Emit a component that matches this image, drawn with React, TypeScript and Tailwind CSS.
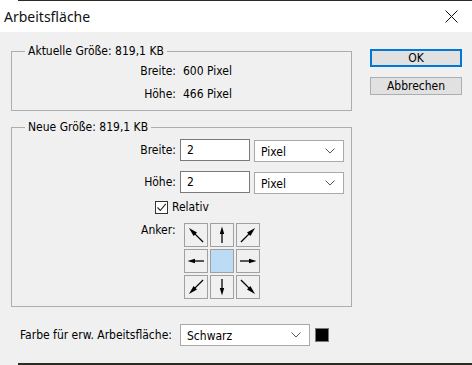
import React from "react";

const BODY = "font-['DejaVu_Sans_Condensed','DejaVu_Sans',sans-serif] text-[12px]";

function Arrow({ angle }: { angle: number }) {
  const diag = angle % 90 !== 0;
  return (
    <svg width="22" height="22" viewBox="0 0 22 22">
      <g transform={`rotate(${angle} 11 11)`}>
        <line x1="11" y1={diag ? 21 : 19} x2="11" y2="8" stroke="#000" strokeWidth="1.3" />
        <polygon points={diag ? "11,1 8.6,10 13.4,10" : "11,2.5 8.8,10 13.2,10"} fill="#000" />
      </g>
    </svg>
  );
}

function Chevron() {
  return (
    <svg width="10" height="6" viewBox="0 0 10 6" className="shrink-0">
      <polyline points="0.5,0.5 5,5 9.5,0.5" fill="none" stroke="#555" strokeWidth="1" />
    </svg>
  );
}

function Select({ label, w }: { label: string; w: string }) {
  return (
    <div className={`${w} h-[22px] bg-white border border-[#a9a9a9] flex items-center justify-between pl-[6px] pr-[8px]`}>
      <span className="pt-[1px]">{label}</span>
      <Chevron />
    </div>
  );
}

export default function App() {
  const cells: (number | null)[] = [-45, 0, 45, -90, null, 90, -135, 180, 135];
  return (
    <div className={`w-[472px] h-[365px] flex flex-col overflow-hidden bg-[#f0f0f0] text-black ${BODY}`}>
      <div className="h-[1px] flex shrink-0">
        <div className="w-[18px] bg-white" />
        <div className="flex-1 bg-[#2d2c22]" />
      </div>
      <div className="h-[31px] shrink-0 bg-white flex items-center justify-between pl-[4px] pr-[14px]">
        <span className="text-[14px] font-['Noto_Sans',sans-serif] text-[#111]">Arbeitsfläche</span>
        <svg width="13" height="13" viewBox="0 0 13 13">
          <line x1="0.5" y1="0.5" x2="12.5" y2="12.5" stroke="#111" strokeWidth="1" />
          <line x1="12.5" y1="0.5" x2="0.5" y2="12.5" stroke="#111" strokeWidth="1" />
        </svg>
      </div>
      <div className="flex-1 flex">
        <div className="w-[359px] pl-[11px] pt-[19px] flex flex-col">
          {/* Group 1 */}
          <div className="relative w-[341px] h-[60px] border border-[#adadad] pt-[12px] flex flex-col gap-[9px]">
            <span className="absolute -top-[8px] left-[13px] px-[3px] bg-[#f0f0f0] leading-[14px]">Aktuelle Größe: 819,1 KB</span>
            <div className="flex leading-[14px]">
              <span className="w-[164px] text-right">Breite:</span>
              <span className="ml-[7px]">600 Pixel</span>
            </div>
            <div className="flex leading-[14px]">
              <span className="w-[164px] text-right">Höhe:</span>
              <span className="ml-[7px]">466 Pixel</span>
            </div>
          </div>
          {/* Group 2 */}
          <div className="relative mt-[16px] w-[341px] h-[180px] border border-[#adadad] pt-[11px] flex flex-col">
            <span className="absolute -top-[8px] left-[13px] px-[3px] bg-[#f0f0f0] leading-[14px]">Neue Größe: 819,1 KB</span>
            <div className="flex items-start">
              <span className="w-[164px] text-right leading-[22px]">Breite:</span>
              <div className="ml-[4px] w-[70px] h-[22px] bg-white border border-[#7a7a7a] pl-[6px] leading-[20px]">2</div>
              <div className="ml-[4px] mt-[1px]"><Select label="Pixel" w="w-[90px]" /></div>
            </div>
            <div className="flex items-start mt-[9px]">
              <span className="w-[164px] text-right leading-[22px]">Höhe:</span>
              <div className="ml-[4px] w-[70px] h-[22px] bg-white border border-[#7a7a7a] pl-[6px] leading-[20px]">2</div>
              <div className="ml-[4px] mt-[1px]"><Select label="Pixel" w="w-[90px]" /></div>
            </div>
            <div className="flex items-center mt-[6px] pl-[143px]">
              <div className="w-[13px] h-[13px] bg-white border border-[#333] flex items-center justify-center">
                <svg width="11" height="11" viewBox="0 0 11 11">
                  <polyline points="1.5,5.5 4.3,8.5 9.8,1.8" fill="none" stroke="#222" strokeWidth="1.1" />
                </svg>
              </div>
              <span className="ml-[4px] leading-[14px]">Relativ</span>
            </div>
            <div className="flex items-start mt-[9px] pl-[129px]">
              <span className="leading-[14px]">Anker:</span>
              <div className="ml-[8px] grid grid-cols-[24px_24px_24px] gap-[2px]">
                {cells.map((a, i) => (
                  <div
                    key={i}
                    className={`w-[24px] h-[24px] border border-[#a0a0a0] flex items-center justify-center ${a === null ? "bg-[#bcdcf6]" : "bg-[#f0f0f0]"}`}
                  >
                    {a !== null && <Arrow angle={a} />}
                  </div>
                ))}
              </div>
            </div>
          </div>
          {/* Bottom row */}
          <div className="mt-[17px] flex items-center pl-[9px]">
            <span className="w-[160px]">Farbe für erw. Arbeitsfläche:</span>
            <Select label="Schwarz" w="w-[130px]" />
            <div className="ml-[5px] w-[14px] h-[14px] bg-black border border-[#777]" />
          </div>
        </div>
        <div className="pl-[11px] pt-[17px] flex flex-col gap-[10px]">
          <div className="w-[92px] h-[18px] border-2 border-[#0078d7] bg-[#e1e1e1] flex items-center justify-center leading-[14px]">OK</div>
          <div className="w-[92px] h-[18px] border border-[#adadad] bg-[#e1e1e1] flex items-center justify-center leading-[14px]">Abbrechen</div>
        </div>
      </div>
      <div className="h-[2px] flex shrink-0">
        <div className="w-[18px] bg-[#f0f0f0]" />
        <div className="flex-1 bg-[#2d2c22]" />
      </div>
    </div>
  );
}
